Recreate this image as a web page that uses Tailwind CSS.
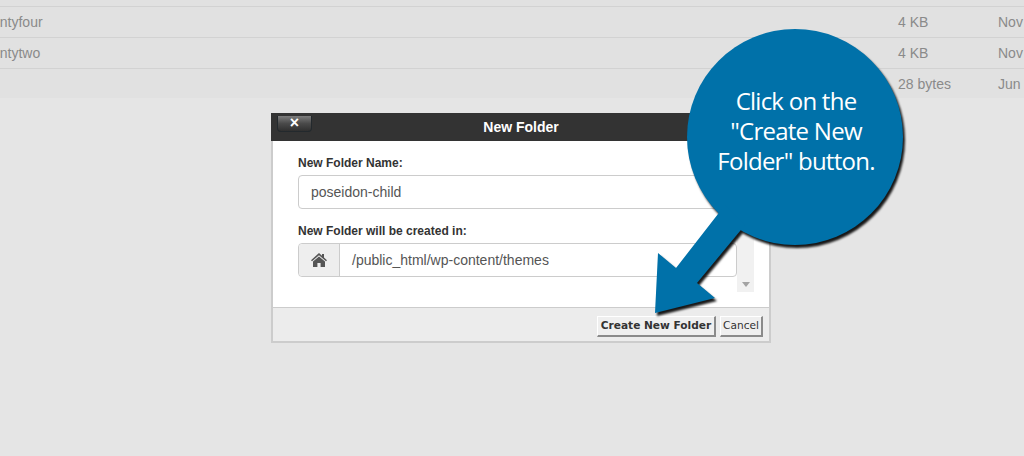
<!DOCTYPE html>
<html lang="en">
<head>
    <meta charset="UTF-8">
    <title>New Folder</title>
    <script src="https://cdn.jsdelivr.net/npm/@tailwindcss/browser@4"></script>
</head>
<body class="relative h-[456px] w-[1024px] overflow-hidden bg-[#e5e5e5] font-['Liberation_Sans',sans-serif] text-sm">
    <!-- file list behind the overlay -->
    <div class="bg-[#e1e1e1] text-[#8a8a8a]">
        <div class="h-[6px]"></div>
        <div class="flex h-[31px] items-center border-t border-[#d2d2d2]">
            <span class="ml-[-22px] w-[920px]">twentyfour</span>
            <span class="w-[100px]">4 KB</span>
            <span class="whitespace-nowrap">Nov</span>
        </div>
        <div class="flex h-[31px] items-center border-t border-[#d2d2d2]">
            <span class="ml-[-22px] w-[920px]">twentytwo</span>
            <span class="w-[100px]">4 KB</span>
            <span class="whitespace-nowrap">Nov</span>
        </div>
        <div class="flex h-[30px] items-center border-t border-[#d2d2d2]">
            <span class="ml-[-22px] w-[920px]"></span>
            <span class="w-[100px]">28 bytes</span>
            <span class="whitespace-nowrap">Jun</span>
        </div>
    </div>

    <!-- dialog -->
    <div class="mt-[15px] ml-[271px] w-[500px] border-x-2 border-b-2 border-[#cccccc] bg-white">
        <div class="relative -mx-[2px] flex h-[28px] items-center justify-center bg-[#333333] text-sm font-bold text-white">
            <span>New Folder</span>
            <div class="absolute top-[3px] left-[6px] flex h-[16px] w-[35px] items-start justify-center rounded-b-[4px] border border-t-0 border-[#23292d] bg-gradient-to-b from-[#7d7d7d] via-[#4a4a4a] to-[#303030] text-[16px] leading-[13px]">×</div>
        </div>
        <div class="relative h-[166px] pt-[14px] pr-[32px] pl-[25px]">
            <label class="block text-xs leading-[16px] font-bold text-[#333333]">New Folder Name:</label>
            <div class="mt-[4px] flex h-[34px] items-center rounded border border-[#cccccc] pl-[12px] text-[#555555]">poseidon-child</div>
            <label class="mt-[14px] block text-xs leading-[16px] font-bold text-[#333333]">New Folder will be created in:</label>
            <div class="mt-[4px] flex h-[34px] items-center rounded border border-[#cccccc] text-[#555555]">
                <div class="flex h-full w-[41px] shrink-0 items-center justify-center rounded-l border-r border-[#cccccc] bg-[#eeeeee]">
                    <svg class="h-[14px] w-[16px]" viewBox="0 0 16 14" fill="#555555">
                        <path d="M8 0 L11 2.7 V1 H13 V4.5 L16 7.2 L15 8.3 L8 2.2 L1 8.3 L0 7.2 Z"/>
                        <path d="M8 3.5 L14 8.6 V14 H9.6 V10 H6.4 V14 H2 V8.6 Z"/>
                    </svg>
                </div>
                <span class="pl-[12px]">/public_html/wp-content/themes</span>
            </div>
            <div class="absolute top-0 right-[15px] bottom-[15px] w-[17px] bg-[#f1f1f1]">
                <div class="absolute bottom-[5px] left-[5px] h-0 w-0 border-x-[4px] border-t-[5px] border-x-transparent border-t-[#a3a3a3]"></div>
            </div>
        </div>
        <div class="flex h-[34px] items-center justify-end gap-[4px] border-t border-[#cccccc] bg-[#ececec] pt-[3px] pr-[6px] font-['DejaVu_Sans',sans-serif] text-[10.6px] text-[#333333]">
            <button class="h-[21px] w-[119px] border-t border-r-2 border-b-2 border-l border-t-white border-r-[#8a8a8a] border-b-[#8a8a8a] border-l-white bg-[#efefef] font-bold">Create New Folder</button>
            <button class="h-[21px] w-[43px] border-t border-r-2 border-b-2 border-l border-t-white border-r-[#8a8a8a] border-b-[#8a8a8a] border-l-white bg-[#efefef]">Cancel</button>
        </div>
    </div>

    <!-- callout drawn over the page -->
    <svg class="absolute top-0 left-0 drop-shadow-[2px_3px_1px_rgba(0,0,0,0.9)]" width="1024" height="456" viewBox="0 0 1024 456" fill="#0071a9">
        <circle cx="795" cy="137" r="108"/>
        <path d="M725 205 L676 268 L658 253 L655 313 L715 298 L697 283 L745 225 Z"/>
    </svg>
    <div class="absolute top-[86px] left-[688px] w-[216px] text-center font-['Open_Sans',sans-serif] text-[24px] leading-[30px] tracking-[-0.75px] text-white">
        Click on the<br>"Create New<br>Folder" button.
    </div>
</body>
</html>
